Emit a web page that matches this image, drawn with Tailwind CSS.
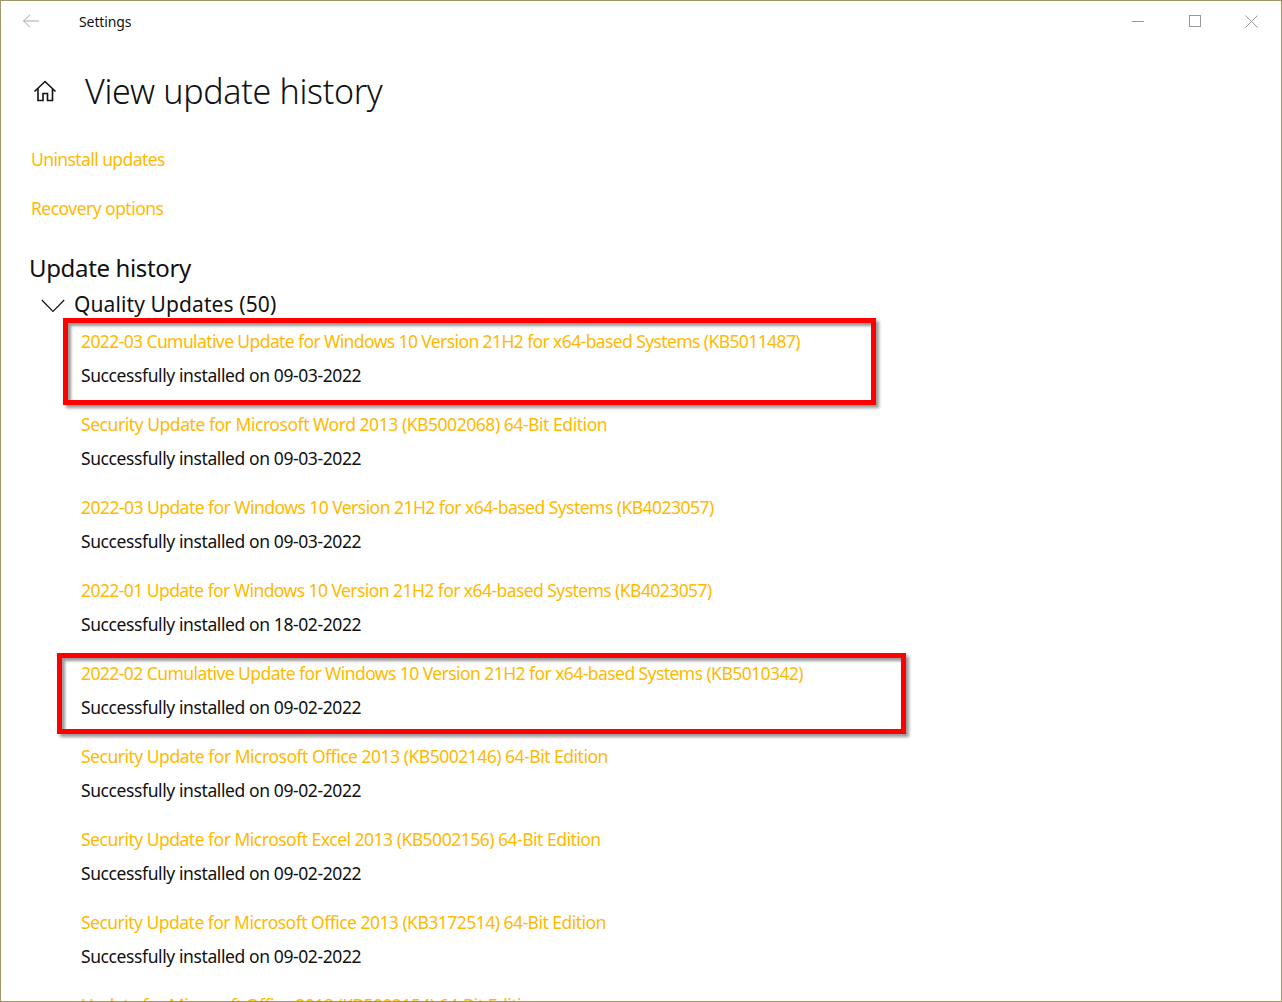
<!DOCTYPE html>
<html lang="en">
<head>
    <meta charset="UTF-8" />
    <meta name="viewport" content="width=device-width, initial-scale=1.0" />
    <script src="https://cdn.jsdelivr.net/npm/@tailwindcss/browser@4"></script>
    <title>Settings</title>
</head>
<body class="bg-white overflow-hidden">
    <div class="relative w-[1282px] h-[1002px] overflow-hidden bg-white border border-[#a39565] font-['Noto_Sans',sans-serif] text-[#111]">
        <!-- title bar -->
        <div class="flex items-center h-[40px]">
            <svg class="ml-[21px] w-[18px] h-[14px]" viewBox="0 0 18 14" fill="none" stroke="#a8a8a8" stroke-width="1">
                <path d="M1.5 7H17M8 0.8L1.5 7L8 13.2" />
            </svg>
            <span class="ml-[39px] text-[14px] tracking-[-0.1px]">Settings</span>
            <div class="ml-auto flex items-center">
                <div class="w-[12px] h-px bg-[#999] mr-[45px]"></div>
                <div class="w-[12px] h-[12px] border border-[#999] mr-[44px]"></div>
                <svg class="w-[13px] h-[13px] mr-[23px]" viewBox="0 0 13 13" fill="none" stroke="#999" stroke-width="1">
                    <path d="M0.5 0.5L12.5 12.5M12.5 0.5L0.5 12.5" />
                </svg>
            </div>
        </div>

        <!-- page heading -->
        <div class="flex items-center h-[60px] mt-[20px]">
            <svg class="ml-[32px] w-[24px] h-[22px]" viewBox="0 0 24 22" fill="none" stroke="#111" stroke-width="1.6">
                <path d="M1.5 11.5L12 1.5L22.5 11.5M5 8.5V20.5H10V13.5H14.5V20.5H19.5V8.5" />
            </svg>
            <h1 class="ml-[28px] text-[34px] font-light tracking-[-0.3px]">View update history</h1>
        </div>

        <!-- links -->
        <div class="mt-[26px] ml-[30px] flex flex-col gap-[24px] text-[17.5px] leading-[25px] text-[#ffb900]">
            <a class="tracking-[-0.59px]">Uninstall updates</a>
            <a class="tracking-[-0.53px]">Recovery options</a>
        </div>

        <h2 class="mt-[30px] ml-[28px] text-[24px] leading-[34px] tracking-[-0.35px]">Update history</h2>

        <div class="flex items-center h-[40px]">
            <svg class="ml-[40px] w-[24px] h-[14px] mt-[2px]" viewBox="0 0 24 14" fill="none" stroke="#111" stroke-width="1.2">
                <path d="M0.8 1L12 12.5L23.2 1" />
            </svg>
            <span class="ml-[9px] text-[21px] tracking-[0.1px]">Quality Updates (50)</span>
        </div>

        <!-- updates list -->
        <ul id="updates" class="mt-[4px] ml-[80px] flex flex-col gap-[24px] text-[17.5px] leading-[25px]">
            <li class="flex flex-col gap-[9px]"><a class="text-[#ffb900] tracking-[-0.6px]">2022-03 Cumulative Update for Windows 10 Version 21H2 for x64-based Systems (KB5011487)</a><span class="tracking-[-0.4px]">Successfully installed on 09-03-2022</span></li>
            <li class="flex flex-col gap-[9px]"><a class="text-[#ffb900] tracking-[-0.45px]">Security Update for Microsoft Word 2013 (KB5002068) 64-Bit Edition</a><span class="tracking-[-0.4px]">Successfully installed on 09-03-2022</span></li>
            <li class="flex flex-col gap-[9px]"><a class="text-[#ffb900] tracking-[-0.54px]">2022-03 Update for Windows 10 Version 21H2 for x64-based Systems (KB4023057)</a><span class="tracking-[-0.4px]">Successfully installed on 09-03-2022</span></li>
            <li class="flex flex-col gap-[9px]"><a class="text-[#ffb900] tracking-[-0.565px]">2022-01 Update for Windows 10 Version 21H2 for x64-based Systems (KB4023057)</a><span class="tracking-[-0.4px]">Successfully installed on 18-02-2022</span></li>
            <li class="flex flex-col gap-[9px]"><a class="text-[#ffb900] tracking-[-0.565px]">2022-02 Cumulative Update for Windows 10 Version 21H2 for x64-based Systems (KB5010342)</a><span class="tracking-[-0.4px]">Successfully installed on 09-02-2022</span></li>
            <li class="flex flex-col gap-[9px]"><a class="text-[#ffb900] tracking-[-0.49px]">Security Update for Microsoft Office 2013 (KB5002146) 64-Bit Edition</a><span class="tracking-[-0.4px]">Successfully installed on 09-02-2022</span></li>
            <li class="flex flex-col gap-[9px]"><a class="text-[#ffb900] tracking-[-0.5px]">Security Update for Microsoft Excel 2013 (KB5002156) 64-Bit Edition</a><span class="tracking-[-0.4px]">Successfully installed on 09-02-2022</span></li>
            <li class="flex flex-col gap-[9px]"><a class="text-[#ffb900] tracking-[-0.52px]">Security Update for Microsoft Office 2013 (KB3172514) 64-Bit Edition</a><span class="tracking-[-0.4px]">Successfully installed on 09-02-2022</span></li>
            <li class="flex flex-col gap-[9px]"><a class="text-[#ffb900] tracking-[-0.5px]">Update for Microsoft Office 2013 (KB5002154) 64-Bit Edition</a></li>
        </ul>

        <!-- red annotation boxes -->
        <div class="absolute left-[62px] top-[317px] w-[813px] h-[87px] border-[5px] border-[#ff0000] shadow-[3px_3px_3px_rgba(0,0,0,0.4),inset_3px_3px_3px_rgba(0,0,0,0.4)]"></div>
        <div class="absolute left-[56px] top-[652px] w-[849px] h-[81px] border-[5px] border-[#ff0000] shadow-[3px_3px_3px_rgba(0,0,0,0.4),inset_3px_3px_3px_rgba(0,0,0,0.4)]"></div>
    </div>
</body>
</html>
